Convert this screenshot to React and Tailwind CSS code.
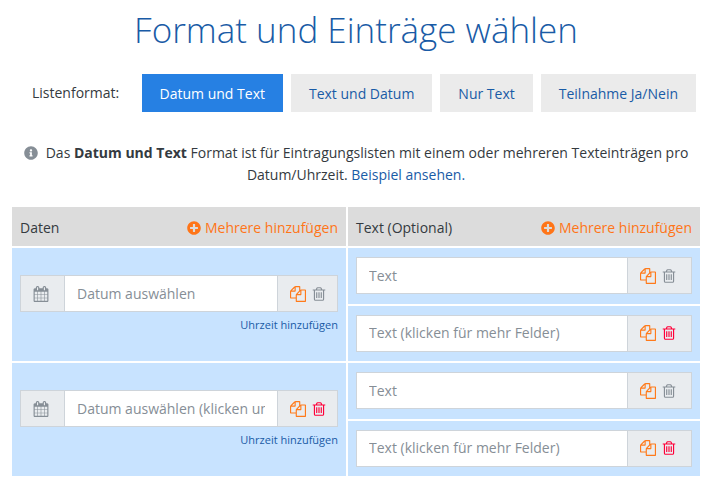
import React, { useState } from "react";
import { FaInfoCircle, FaPlusCircle } from "react-icons/fa";

const formats = ["Datum und Text", "Text und Datum", "Nur Text", "Teilnahme Ja/Nein"];

const rows = [
  { id: 1, placeholder: "Datum auswählen", removable: false },
  { id: 2, placeholder: "Datum auswählen (klicken um mehr Felder)", removable: true },
];

const CalendarIcon = () => (
  <svg viewBox="0 0 1792 1792" className="size-4 fill-current" aria-hidden="true">
    <path d="M192 1664h288v-288h-288v288zm352 0h320v-288h-320v288zm-352-352h288v-320h-288v320zm352 0h320v-320h-320v320zm-352-384h288v-288h-288v288zm736 736h320v-288h-320v288zm-384-736h320v-288h-320v288zm768 736h288v-288h-288v288zm-384-352h320v-320h-320v320zm-352-864v-288q0-13-9.5-22.5t-22.5-9.5h-64q-13 0-22.5 9.5t-9.5 22.5v288q0 13 9.5 22.5t22.5 9.5h64q13 0 22.5-9.5t9.5-22.5zm736 864h288v-320h-288v320zm-384-384h320v-288h-320v288zm384 0h288v-288h-288v288zm32-480v-288q0-13-9.5-22.5t-22.5-9.5h-64q-13 0-22.5 9.5t-9.5 22.5v288q0 13 9.5 22.5t22.5 9.5h64q13 0 22.5-9.5t9.5-22.5zm384-64v1280q0 52-38 90t-90 38h-1408q-52 0-90-38t-38-90v-1280q0-52 38-90t90-38h128v-96q0-66 47-113t113-47h64q66 0 113 47t47 113v96h384v-96q0-66 47-113t113-47h64q66 0 113 47t47 113v96h128q52 0 90 38t38 90z" />
  </svg>
);

const CopyIcon = () => (
  <svg viewBox="0 0 1792 1792" className="size-4 fill-current" aria-hidden="true">
    <path d="M1696 384q40 0 68 28t28 68v1216q0 40-28 68t-68 28h-960q-40 0-68-28t-28-68v-288h-544q-40 0-68-28t-28-68v-672q0-40 20-88t48-76l408-408q28-28 76-48t88-20h416q40 0 68 28t28 68v328q68-40 128-40h416zm-544 213l-299 299h299v-299zm-640-384l-299 299h299v-299zm196 647l316-316v-416h-384v416q0 40-28 68t-68 28h-416v640h512v-256q0-40 20-88t48-76zm956 804v-1152h-384v416q0 40-28 68t-68 28h-416v640h896z" />
  </svg>
);

const TrashIcon = () => (
  <svg viewBox="128 0 1536 1792" className="h-4 w-[14px] fill-current" aria-hidden="true">
    <path d="M704 736v576q0 14-9 23t-23 9h-64q-14 0-23-9t-9-23v-576q0-14 9-23t23-9h64q14 0 23 9t9 23zm256 0v576q0 14-9 23t-23 9h-64q-14 0-23-9t-9-23v-576q0-14 9-23t23-9h64q14 0 23 9t9 23zm256 0v576q0 14-9 23t-23 9h-64q-14 0-23-9t-9-23v-576q0-14 9-23t23-9h64q14 0 23 9t9 23zm128 724v-948h-896v948q0 22 7 40.5t14.5 27 10.5 8.5h832q3 0 10.5-8.5t14.5-27 7-40.5zm-672-1076h448l-48-117q-7-9-17-11h-317q-10 2-17 11zm928 32v64q0 14-9 23t-23 9h-96v948q0 83-47 143.5t-113 60.5h-832q-66 0-113-58.5t-47-141.5v-952h-96q-14 0-23-9t-9-23v-64q0-14 9-23t23-9h309l70-167q15-37 54-63t79-26h320q40 0 79 26t54 63l70 167h309q14 0 23 9t9 23z" />
  </svg>
);

const EntryField = ({ label, placeholder, removable, withCalendar }) => (
  <div className="flex h-[37px] w-full border border-[#ced4da] bg-[#e9ecef]">
    {withCalendar && (
      <span className="flex shrink-0 items-center border-r border-[#ced4da] pr-[15px] pl-3 text-[#868e96]">
        <CalendarIcon />
      </span>
    )}
    <input
      type="text"
      aria-label={label}
      placeholder={placeholder}
      className="min-w-0 flex-1 bg-white px-3 text-sm text-[#343a40] outline-none placeholder:text-[#868e96]"
    />
    <span
      className={`flex shrink-0 items-center gap-1.5 border-l border-[#ced4da] pl-3 ${
        withCalendar ? "pr-[11px]" : "pr-[15px]"
      }`}
    >
      <button type="button" aria-label="Kopieren" className="text-[#ff7a1a]">
        <CopyIcon />
      </button>
      <button
        type="button"
        aria-label="Löschen"
        disabled={!removable}
        className={removable ? "text-[#ff0039]" : "text-[#868e96]"}
      >
        <TrashIcon />
      </button>
    </span>
  </div>
);

const ColumnHeader = ({ title }) => (
  <div className="flex h-[39px] items-center justify-between bg-[#dcdcdc] px-2 pt-0.5">
    <span>{title}</span>
    <button type="button" className="flex items-center gap-1 text-[#ff7518]">
      <FaPlusCircle className="size-[14px]" />
      Mehrere hinzufügen
    </button>
  </div>
);

const App = () => {
  const [format, setFormat] = useState(formats[0]);

  return (
    <main className="bg-white pt-1.5 pr-2.5 pb-2 pl-3 font-['Open_Sans','Noto_Sans',sans-serif] text-sm leading-[22px] text-[#343a40]">
      <h1 className="text-center text-[35px] leading-[48px] font-light text-[#195ba6]">
        Format und Einträge wählen
      </h1>

      <div className="mt-5 flex items-center justify-between pr-1 pl-5">
        <span>Listenformat:</span>
        <div className="flex gap-2">
          {formats.map((name) => (
            <button
              key={name}
              type="button"
              onClick={() => setFormat(name)}
              className={`h-[38px] px-[18px] pt-px whitespace-nowrap ${
                name === format ? "bg-[#2680e3] text-white" : "bg-[#ebebeb] text-[#195ba6]"
              }`}
            >
              {name}
            </button>
          ))}
        </div>
      </div>

      <p className="mt-[30px] px-2 text-center">
        <FaInfoCircle className="mr-2 inline size-[14px] align-[-2px] text-[#868e96]" />
        Das <strong className="font-bold">Datum und Text</strong> Format ist für Eintragungslisten
        mit einem oder mehreren Texteinträgen pro Datum/Uhrzeit.{" "}
        <a href="#beispiel" className="text-[#195ba6]">
          Beispiel ansehen.
        </a>
      </p>

      <div className="mt-[21px] grid grid-cols-[minmax(0,334fr)_minmax(0,352fr)] gap-0.5">
        <ColumnHeader title="Daten" />
        <ColumnHeader title="Text (Optional)" />

        {rows.map((row) => (
          <React.Fragment key={row.id}>
            <div className="row-span-2 flex min-h-[113px] flex-col items-end justify-center bg-[#c8e3ff] px-2">
              <EntryField
                label={`Datum ${row.id}`}
                placeholder={row.placeholder}
                removable={row.removable}
                withCalendar
              />
              <a href="#uhrzeit" className="pt-1 text-[11px] leading-[18px] text-[#195ba6]">
                Uhrzeit hinzufügen
              </a>
            </div>
            <div className="flex items-center bg-[#c8e3ff] px-2 py-[9px]">
              <EntryField label={`Text ${row.id}.1`} placeholder="Text" />
            </div>
            <div className="flex items-center bg-[#c8e3ff] px-2 py-[9px]">
              <EntryField
                label={`Text ${row.id}.2`}
                placeholder="Text (klicken für mehr Felder)"
                removable
              />
            </div>
          </React.Fragment>
        ))}
      </div>
    </main>
  );
};

export default App;
